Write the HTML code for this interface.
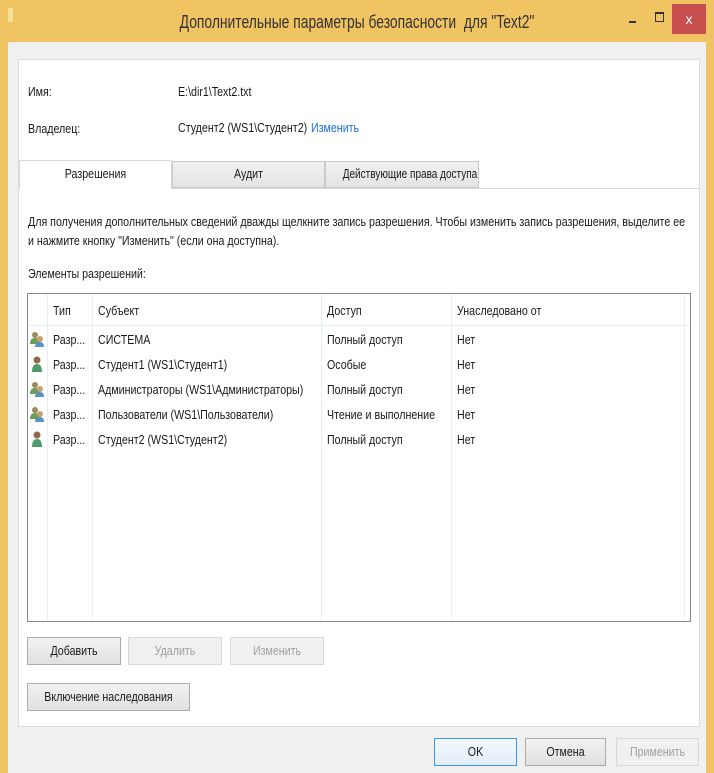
<!DOCTYPE html>
<html><head><meta charset="utf-8"><style>
*{margin:0;padding:0;box-sizing:border-box}
body{width:714px;height:773px;overflow:hidden;background:#f0c462;font-family:"Liberation Sans",sans-serif;font-size:13px;color:#1a1a1a;position:relative}
.a{position:absolute}
.t{position:absolute;white-space:nowrap;transform:scaleX(0.82);transform-origin:0 50%;line-height:16px}
.c{transform-origin:50% 50%}
.btn{position:absolute;background:linear-gradient(#f2f2f2,#e0e0e0);border:1px solid #acacac;height:28px}
.dis{background:#f0f0f0;border:1px solid #d9d9d9;color:#a0a0a0}
.btn span{position:absolute;left:0;right:0;top:5px;text-align:center;white-space:nowrap;transform:scaleX(0.82)}
.vl{position:absolute;top:0;bottom:0;width:1px;background:#e6eef8}
</style></head><body>
<div class="a" style="left:8px;top:8px;width:5px;height:14px;background:#f7e09a;border-radius:1px"></div>
<div class="t" style="left:0;right:0;top:14px;font-size:18px;text-align:center;transform:scaleX(0.77);transform-origin:50% 50%;color:#333">Дополнительные параметры безопасности&nbsp; для "Text2"</div>
<div class="a" style="left:629px;top:21px;width:7px;height:2px;background:#333"></div>
<div class="a" style="left:655px;top:12px;width:9px;height:10px;border:1px solid #333;border-top-width:2px"></div>
<div class="a" style="left:672px;top:4px;width:34px;height:30px;background:#c7504f;color:#fff;text-align:center;line-height:30px;font-size:14px">x</div>
<div class="a" style="left:8px;top:42px;width:698px;height:731px;background:#f0f0f0"></div>
<div class="a" style="left:18px;top:59px;width:682px;height:668px;background:#fff;border:1px solid #dcdcdc"></div>
<div class="t" style="left:28px;top:84px">Имя:</div>
<div class="t" style="left:178px;top:84px">E:\dir1\Text2.txt</div>
<div class="t" style="left:28px;top:121px">Владелец:</div>
<div class="t" style="left:178px;top:120px">Студент2 (WS1\Студент2)</div>
<div class="t" style="left:311px;top:120px;color:#1a6fd8">Изменить</div>
<div class="a" style="left:19px;top:188px;width:680px;height:1px;background:#d9d9d9"></div>
<div class="a" style="left:19px;top:160px;width:153px;height:29px;background:#fff;border:1px solid #d9d9d9;border-bottom:none"></div>
<div class="a" style="left:172px;top:161px;width:153px;height:27px;background:linear-gradient(#f0f0f0,#e4e4e4);border:1px solid #c9c9c9"></div>
<div class="a" style="left:325px;top:161px;width:154px;height:27px;background:linear-gradient(#f0f0f0,#e4e4e4);border:1px solid #c9c9c9"></div>
<div class="t c" style="left:19px;width:153px;top:166px;text-align:center">Разрешения</div>
<div class="t c" style="left:172px;width:153px;top:166px;text-align:center">Аудит</div>
<div class="t c" style="left:325px;width:154px;top:166px;text-align:center;transform:scaleX(0.77)">Действующие права доступа</div>
<div class="t" style="left:28px;top:214px">Для получения дополнительных сведений дважды щелкните запись разрешения. Чтобы изменить запись разрешения, выделите ее</div>
<div class="t" style="left:28px;top:233px">и нажмите кнопку "Изменить" (если она доступна).</div>
<div class="t" style="left:28px;top:266px">Элементы разрешений:</div>
<div class="a" style="left:27px;top:293px;width:664px;height:329px;border:1px solid #828790;background:#fff">
 <div class="vl" style="left:19px"></div><div class="vl" style="left:64px"></div><div class="vl" style="left:293px"></div><div class="vl" style="left:423px"></div><div class="vl" style="left:656px"></div>
 <div class="a" style="left:0;top:31px;width:662px;height:1px;background:#e6eef8"></div>
 <div class="t" style="left:25px;top:9px">Тип</div>
 <div class="t" style="left:70px;top:9px">Субъект</div>
 <div class="t" style="left:299px;top:9px">Доступ</div>
 <div class="t" style="left:429px;top:9px">Унаследовано от</div>
</div>
<div class="a" style="left:30px;top:331px;width:14px;height:16px"><svg width="14" height="16"><circle cx="5" cy="4" r="3" fill="#9b8a5a"/><path d="M0 13 Q0 7 5 7 Q10 7 10 13Z" fill="#6a9f5a"/><circle cx="10" cy="8" r="3" fill="#c9a070"/><path d="M5 16 Q5 11 10 11 Q14 11 14 16Z" fill="#5a8fc8"/></svg></div>
<div class="a" style="left:30px;top:356px;width:14px;height:16px"><svg width="14" height="16"><circle cx="7" cy="4" r="3.5" fill="#8a6a4a"/><path d="M2 16 Q2 8 7 8 Q12 8 12 16Z" fill="#4f9a6a"/></svg></div>
<div class="a" style="left:30px;top:381px;width:14px;height:16px"><svg width="14" height="16"><circle cx="5" cy="4" r="3" fill="#9b8a5a"/><path d="M0 13 Q0 7 5 7 Q10 7 10 13Z" fill="#6a9f5a"/><circle cx="10" cy="8" r="3" fill="#c9a070"/><path d="M5 16 Q5 11 10 11 Q14 11 14 16Z" fill="#5a8fc8"/></svg></div>
<div class="a" style="left:30px;top:406px;width:14px;height:16px"><svg width="14" height="16"><circle cx="5" cy="4" r="3" fill="#9b8a5a"/><path d="M0 13 Q0 7 5 7 Q10 7 10 13Z" fill="#6a9f5a"/><circle cx="10" cy="8" r="3" fill="#c9a070"/><path d="M5 16 Q5 11 10 11 Q14 11 14 16Z" fill="#5a8fc8"/></svg></div>
<div class="a" style="left:30px;top:431px;width:14px;height:16px"><svg width="14" height="16"><circle cx="7" cy="4" r="3.5" fill="#8a6a4a"/><path d="M2 16 Q2 8 7 8 Q12 8 12 16Z" fill="#4f9a6a"/></svg></div>
<div class="t" style="left:53px;top:332px">Разр...</div><div class="t" style="left:98px;top:332px">СИСТЕМА</div><div class="t" style="left:327px;top:332px">Полный доступ</div><div class="t" style="left:457px;top:332px">Нет</div>
<div class="t" style="left:53px;top:357px">Разр...</div><div class="t" style="left:98px;top:357px">Студент1 (WS1\Студент1)</div><div class="t" style="left:327px;top:357px">Особые</div><div class="t" style="left:457px;top:357px">Нет</div>
<div class="t" style="left:53px;top:382px">Разр...</div><div class="t" style="left:98px;top:382px">Администраторы (WS1\Администраторы)</div><div class="t" style="left:327px;top:382px">Полный доступ</div><div class="t" style="left:457px;top:382px">Нет</div>
<div class="t" style="left:53px;top:407px">Разр...</div><div class="t" style="left:98px;top:407px">Пользователи (WS1\Пользователи)</div><div class="t" style="left:327px;top:407px">Чтение и выполнение</div><div class="t" style="left:457px;top:407px">Нет</div>
<div class="t" style="left:53px;top:432px">Разр...</div><div class="t" style="left:98px;top:432px">Студент2 (WS1\Студент2)</div><div class="t" style="left:327px;top:432px">Полный доступ</div><div class="t" style="left:457px;top:432px">Нет</div>
<div class="btn" style="left:27px;top:637px;width:94px"><span>Добавить</span></div>
<div class="btn dis" style="left:128px;top:637px;width:94px"><span>Удалить</span></div>
<div class="btn dis" style="left:230px;top:637px;width:94px"><span>Изменить</span></div>
<div class="btn" style="left:27px;top:683px;width:163px"><span>Включение наследования</span></div>
<div class="btn" style="left:434px;top:738px;width:83px;border-color:#3c9ae8;background:linear-gradient(#f2f7fc,#e3eef9)"><span>OK</span></div>
<div class="btn" style="left:525px;top:738px;width:81px"><span>Отмена</span></div>
<div class="btn dis" style="left:616px;top:738px;width:83px"><span>Применить</span></div>
</body></html>
